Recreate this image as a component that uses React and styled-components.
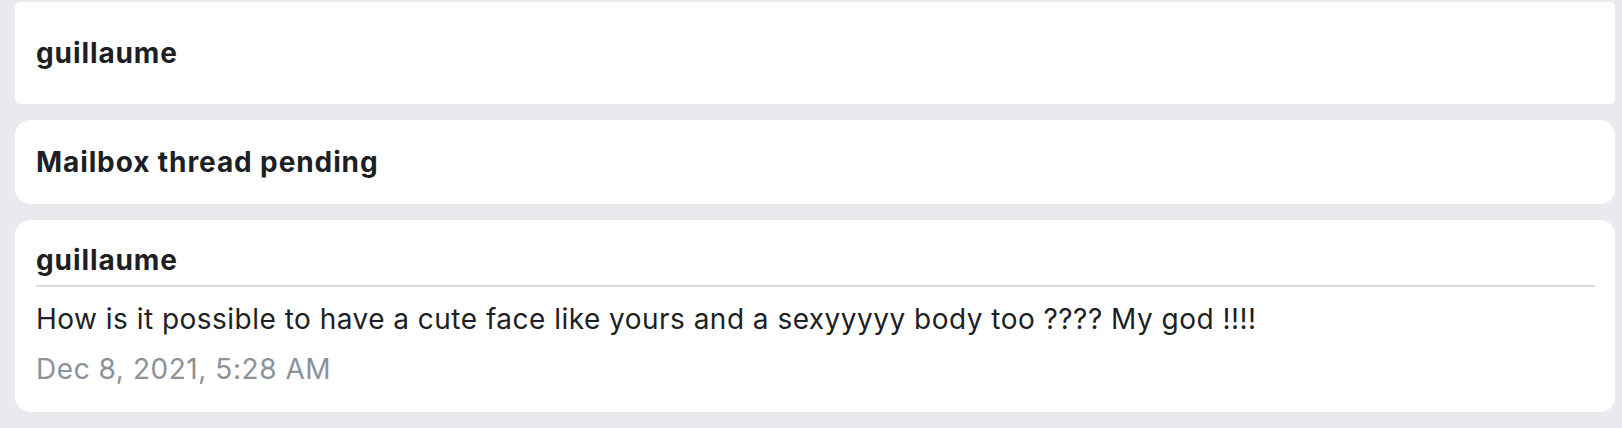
import React from "react";
import styled, { createGlobalStyle } from "styled-components";

const GlobalStyle = createGlobalStyle`
  body {
    margin: 0;
    background: #e9eaee;
    font-family: Inter, "Noto Sans", sans-serif;
    color: #1d1f24;
  }
`;

const Page = styled.div`
  display: flex;
  flex-direction: column;
  gap: 16px;
  padding: 2px 7px 16px 15px;
`;

const Card = styled.div`
  background: #ffffff;
  border-radius: ${(p) => (p.$square ? "5px" : "15px")};
  padding: 0 21px;
`;

const TitleCard = styled(Card)`
  display: flex;
  align-items: center;
  height: ${(p) => p.$height}px;
`;

const Title = styled.div`
  font-size: 28px;
  line-height: 34px;
  font-weight: 700;
  letter-spacing: 0.9px;
`;

const MessageCard = styled(Card)`
  padding: 23px 20px 26px 21px;
`;

const Author = styled(Title)`
  padding-bottom: 8px;
  border-bottom: 2px solid #d8d9de;
`;

const Body = styled.div`
  margin-top: 15px;
  font-size: 28px;
  line-height: 34px;
  letter-spacing: 0.48px;
`;

const Stamp = styled.div`
  margin-top: 16px;
  font-size: 28px;
  line-height: 34px;
  letter-spacing: 0.55px;
  color: #8b929c;
`;

export default function App() {
  return (
    <>
      <GlobalStyle />
      <Page>
        <TitleCard $square $height={102}>
          <Title>guillaume</Title>
        </TitleCard>
        <TitleCard $height={84}>
          <Title>Mailbox thread pending</Title>
        </TitleCard>
        <MessageCard>
          <Author>guillaume</Author>
          <Body>
            How is it possible to have a cute face like yours and a sexyyyyy
            body too ???? My god !!!!
          </Body>
          <Stamp>Dec 8, 2021, 5:28 AM</Stamp>
        </MessageCard>
      </Page>
    </>
  );
}
